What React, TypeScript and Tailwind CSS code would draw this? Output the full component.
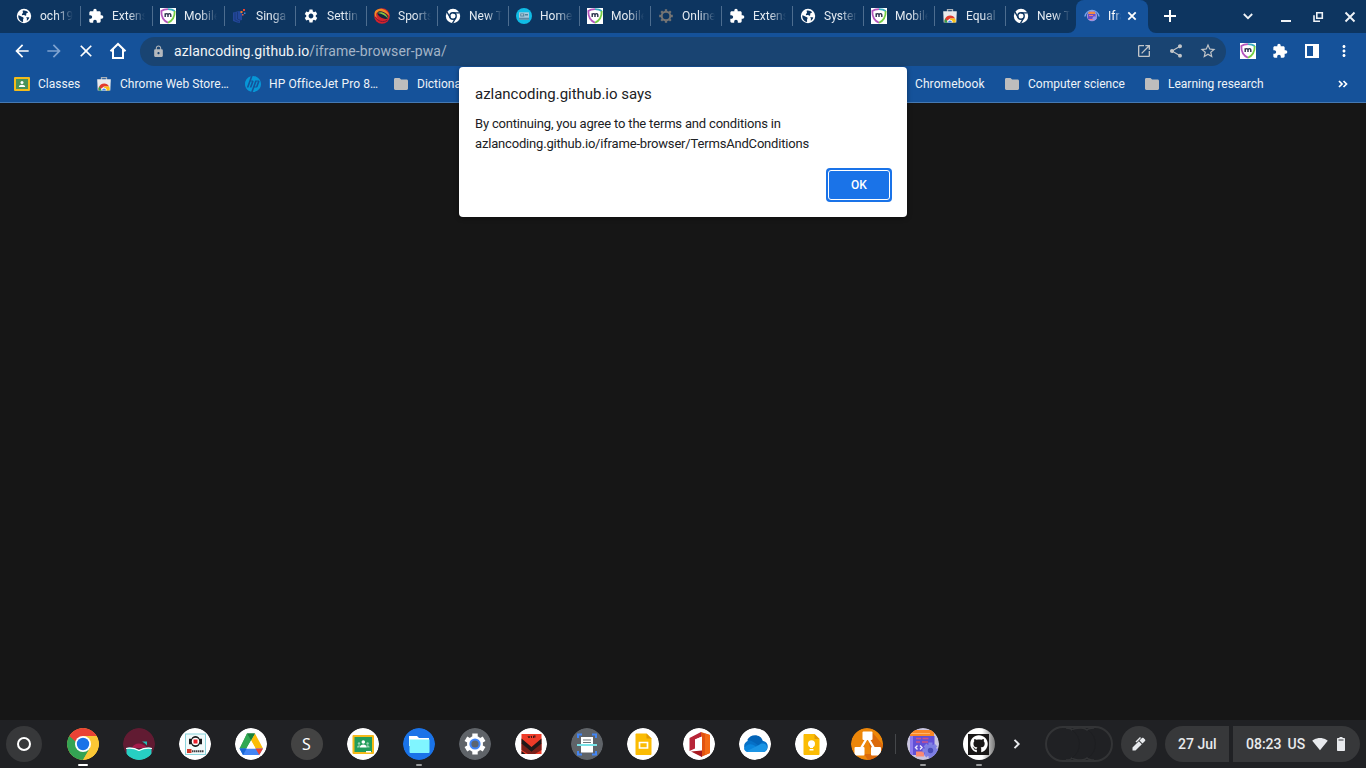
import type { ReactNode } from 'react';
import {
  MdExtension, MdSettings, MdLock, MdArrowBack, MdArrowForward, MdClose,
  MdOpenInNew, MdShare, MdStarBorder, MdMoreVert, MdSignalWifi4Bar,
} from 'react-icons/md';
import { FaGithub } from 'react-icons/fa';
import { SiHp } from 'react-icons/si';

const MobileGuardian = () => (
  <svg width="16" height="16" viewBox="0 0 16 16" className="block">
    <rect width="16" height="16" fill="#fff" />
    <path d="M8 1.2C5.500 1.200 3 1.700 1.300 3 1.200 8 3.300 12.600 8 14.800" fill="none" stroke="#b456bd" strokeWidth="1.800" />
    <path d="M8 1.200C10.500 1.200 13 1.700 14.700 3" fill="none" stroke="#38aebf" strokeWidth="1.800" />
    <path d="M14.700 3C14.800 8 12.700 12.600 8 14.800" fill="none" stroke="#74cf45" strokeWidth="1.800" />
    <path d="M5.200 9V5.300M5.200 6.700c.6-1.500 2.700-1.500 2.800 0V9M8 6.700c.6-1.500 2.700-1.500 2.800 0V9" fill="none" stroke="#28304a" strokeWidth="1.400" />
  </svg>
);

const WebStore = () => (
  <svg width="16" height="16" viewBox="0 0 16 16" className="block">
    <path d="M5.500 4V1.700h5V4" fill="none" stroke="#a9b0b8" strokeWidth="1.300" />
    <path d="M1.200 3.200h13.600l-.5 11.300H1.700z" fill="#e9eaec" />
    <path d="M2.600 14.500a5.600 5.600 0 0 1 .6-4 5.600 5.600 0 0 1 9.900 0H8z" fill="#e33b2e" />
    <path d="M2.600 14.500a5.600 5.600 0 0 1 .6-4l3 4z" fill="#2da14b" />
    <path d="M8 10.500h5.100a5.600 5.600 0 0 1 .4 4H8z" fill="#fbc116" />
    <path d="M5.300 14.500a2.700 2.700 0 0 1 5.400 0z" fill="#fff" />
    <path d="M6 14.500a2 2 0 0 1 4 0z" fill="#4285f4" />
  </svg>
);

const LibraryIcon = () => (
  <svg width="16" height="16" viewBox="0 0 16 16" className="block">
    <path d="M1 4.500L7 3l3 1v8l-2 .5v2.500l-3-.5-4-1.500z" fill="#23479a" />
    <path d="M3 4.500v7.500l4.500 2M5.500 4v7l3.500 1.500" fill="none" stroke="#163470" strokeWidth=".7" />
    <path d="M11 1h2v2h-2z" fill="#e94235" /><path d="M8.500 3h2v2h-2z" fill="#ef7c2b" /><path d="M12 4.500h1.500V6H12z" fill="#3b87d9" /><path d="M10 6h1.500v1.500H10z" fill="#e05b4a" />
  </svg>
);

const SportIcon = () => (
  <svg width="16" height="16" viewBox="0 0 16 16" className="block">
    <circle cx="8" cy="8" r="7.800" fill="#d2232c" />
    <path d="M1 3.500C4-1 13 0 15.500 8c-4-4-9-5-12.500-3.500C1.500 5.500 2 9 4 11 .5 9 0 6 1 3.500z" fill="#f28b24" />
    <ellipse cx="8.800" cy="7.200" rx="5.900" ry="3" transform="rotate(28 8.800 7.200)" fill="#10263f" />
    <path d="M3.500 5c4.500-2 9.500 1 10.500 5.500-2.500-3-5.500-4.500-10.500-5.500z" fill="#8ac43f" />
    <path d="M1.500 9c2 4.500 8 6 12 3" stroke="#7d1636" fill="none" />
  </svg>
);

const HomeSite = () => (
  <svg width="16" height="16" viewBox="0 0 16 16" className="block">
    <circle cx="8" cy="8" r="8" fill="#10bce5" />
    <path d="M3 4.300h10v7.400H3z" fill="#a5c9dc" /><path d="M4.300 5.500h4v3h-4zM9 6h3v1.500H9z" fill="#4f8199" /><path d="M5.200 6.400h2v1h-2z" fill="#d9e9f0" /><path d="M3 9.700h10v2H3z" fill="#5d8aa4" />
  </svg>
);

const GearOutline = () => (
  <svg width="16" height="16" viewBox="0 0 16 16" className="block">
    <g fill="none" stroke="#747474" strokeWidth="2.300"><path d="M8 1.200v13.600M1.200 8h13.600M3.200 3.200l9.600 9.600M12.800 3.200l-9.600 9.600" /></g>
    <circle cx="8" cy="8" r="4.300" fill="#0d3560" stroke="#747474" strokeWidth="2" />
  </svg>
);

const CodeWindow = () => (
  <svg width="32" height="32" viewBox="0 0 32 32" className="block rounded-full">
    <circle cx="16" cy="16" r="16" fill="#c9c5e0" />
    <path d="M3 2h24v6H3z" fill="#fa8726" /><path d="M3 5.500h20" stroke="#ffb26a" />
    <path d="M3 8h24.500v19H3z" fill="#6150d6" />
    <path d="M3 8h3v19H3z" fill="#8d79ed" />
    <path d="M9 10.500h5M15.500 10.500h6M9 14h4M15 14h6" stroke="#c9538c" strokeWidth="1.300" />
    <path d="M10.500 17.500l-2 2 2 2M13 17.500l2 2-2 2" fill="none" stroke="#efeafe" strokeWidth="1.400" />
    <path d="M9 23.500h8v5H9z" fill="#fb8972" />
    <g stroke="#8482e3" strokeWidth="4"><path d="M23.500 14.500v16M15.500 22.500h16M18 17l11 11M29 17l-11 11" /></g>
    <circle cx="23.500" cy="22.500" r="6" fill="#7c7ee2" /><circle cx="23.500" cy="22.500" r="2.700" fill="#4a4db9" />
  </svg>
);

const LoadingIcon = () => (
  <svg width="16" height="16" viewBox="0 0 16 16" className="block shrink-0">
    <path d="M.9 8.500A7.200 7.200 0 0 1 15.100 8.500" fill="none" stroke="#7ba5ee" strokeWidth="1.500" />
    <circle cx="8" cy="8" r="5.200" fill="#9c93dd" /><path d="M4.500 3.800h6.500V6H4.500z" fill="#f08b42" /><path d="M4 6h7.500v5H4z" fill="#6a4dcb" /><path d="M5 7.500h4M5.500 11.500h3.500" stroke="#ed8176" />
    <circle cx="10.500" cy="10.300" r="2" fill="#9495ec" />
  </svg>
);

const Globe = () => (
  <svg width="16" height="16" viewBox="0 0 16 16" className="block">
    <circle cx="8" cy="8" r="7.200" fill="#fff" />
    <path d="M2.300 7.300c1 .2 2 .5 3 1.200.6.500 1.700.5 2.200 1.200.5.900-.6 1.300-.5 2.300 0 .6.300 1.300 0 1.900-3-.3-5-3-4.700-6.600zM6.800 2.600c1.900-.5 4 .2 5.300 1.700-.6.700-1.400.6-1.800 1.300-.4.700.3 1.300-.2 1.800-.8.700-1.500-.4-2.500-.3-.6 0-1 .4-1.500 0-.7-.7.300-1.500.8-2 .4-.6-.5-1.500-.1-2.500zM10.300 9.300c1-.3 2-.1 3 .3-.4 1.300-1.200 2.400-2.300 3.100-.7-.7.300-1.500-.1-2.200-.2-.4-.8-.8-.6-1.200z" fill="#0d3560" />
  </svg>
);
const Puzzle = () => <MdExtension className="block size-4 text-white" />;
const ChromeMono = () => (
  <svg width="16" height="16" viewBox="0 0 16 16" className="block">
    <circle cx="8" cy="8" r="7.200" fill="#fff" />
    <circle cx="8" cy="8" r="3.200" fill="none" stroke="#0d3560" strokeWidth="1.400" />
    <path d="M8 4.800h6.600M5.200 9.600L1.900 3.900M10.800 9.600l-3.300 5.700" stroke="#0d3560" strokeWidth="1.300" fill="none" />
  </svg>
);

const tabs: { label: string; icon: ReactNode }[] = [
  { label: 'och19', icon: <Globe /> },
  { label: 'Extens', icon: <Puzzle /> },
  { label: 'Mobile', icon: <MobileGuardian /> },
  { label: 'Singa', icon: <LibraryIcon /> },
  { label: 'Settin', icon: <MdSettings className="block size-4 text-white" /> },
  { label: 'Sports', icon: <SportIcon /> },
  { label: 'New T', icon: <ChromeMono /> },
  { label: 'Home', icon: <HomeSite /> },
  { label: 'Mobile', icon: <MobileGuardian /> },
  { label: 'Online', icon: <GearOutline /> },
  { label: 'Extens', icon: <Puzzle /> },
  { label: 'System', icon: <Globe /> },
  { label: 'Mobile', icon: <MobileGuardian /> },
  { label: 'Equal', icon: <WebStore /> },
  { label: 'New T', icon: <ChromeMono /> },
];

const fade = '[mask-image:linear-gradient(to_right,black_50%,transparent)]';

function TabStrip() {
  return (
    <div className="flex h-[33px] bg-[#0d3560] pl-[9px]">
      {tabs.map((t, i) => (
        <div key={i} className={`flex shrink-0 items-center pb-px ${i < 3 ? 'w-[72px]' : 'w-[71px]'}`}>
          <div className="ml-[7px] flex size-4 shrink-0 items-center justify-center">{t.icon}</div>
          <div className={`ml-2 w-[33px] shrink-0 overflow-hidden whitespace-nowrap text-[12px] leading-4 text-[#e4ebf2] ${fade}`}>{t.label}</div>
          {i < 14 && <div className={`h-5 w-px shrink-0 bg-[#4d6d8f] ${i < 3 ? 'ml-[7px]' : 'ml-[6px]'}`} />}
        </div>
      ))}
      <div className="-ml-[9px] flex w-[88px] shrink-0">
        <svg width="8" height="33" viewBox="0 0 8 33" className="shrink-0"><path d="M8 25v8H0a8 8 0 0 0 8-8z" fill="#15529a" /></svg>
        <div className="flex w-[72px] items-center rounded-t-lg bg-[#15529a] pb-px pl-2">
          <LoadingIcon />
          <div className={`ml-2 w-[13px] shrink-0 overflow-hidden whitespace-nowrap text-[12px] leading-4 text-white ${fade}`}>Ifra</div>
          <svg className="ml-[3px]" width="16" height="16" viewBox="0 0 16 16"><path d="M4.300 4.300l7.400 7.400M11.700 4.300l-7.400 7.400" stroke="#fff" strokeWidth="1.800" /></svg>
        </div>
        <svg width="8" height="33" viewBox="0 0 8 33" className="shrink-0"><path d="M0 25v8h8a8 8 0 0 1-8-8z" fill="#15529a" /></svg>
      </div>
      <div className="flex flex-1 items-center pb-px text-[#eef2f6]">
        <svg className="ml-[6px]" width="16" height="16" viewBox="0 0 16 16"><path d="M8 2v12M2 8h12" stroke="#fff" strokeWidth="2" /></svg>
        <svg className="ml-[62px]" width="16" height="16" viewBox="0 0 16 16"><path d="M3.800 6L8 10.200 12.200 6" fill="none" stroke="currentColor" strokeWidth="1.800" /></svg>
        <svg className="ml-[22px]" width="16" height="16" viewBox="0 0 16 16"><path d="M3 13h10" stroke="currentColor" strokeWidth="2" /></svg>
        <svg className="ml-4" width="16" height="16" viewBox="0 0 16 16" fill="none" stroke="currentColor" strokeWidth="1.600"><path d="M6.800 4.800h5.500v5.400H6.800zM4 7.200v6h6" /></svg>
        <svg className="ml-4" width="16" height="16" viewBox="0 0 16 16"><path d="M3.500 4.500l9 9M12.500 4.500l-9 9" stroke="currentColor" strokeWidth="1.900" /></svg>
      </div>
    </div>
  );
}

function Toolbar() {
  return (
    <div className="flex h-9 items-center bg-[#15529a] text-white">
      <MdArrowBack className="ml-3 size-5" />
      <MdArrowForward className="ml-3 size-5 text-[#7fa3d0]" />
      <MdClose className="ml-3 size-5" />
      <svg className="ml-[13px]" width="18" height="18" viewBox="0 0 18 18"><path d="M1.500 9.300L9 2l7.500 7.300M4 7.500V16h10V7.500" fill="none" stroke="currentColor" strokeWidth="2" /></svg>
      <div className="mt-px ml-[13px] flex h-[29px] w-[1086px] items-center rounded-full bg-[#194472] pb-px pl-3 text-[#c2c5c8]">
        <MdLock className="size-[13px] text-[#b5b9bd]" />
        <div className="ml-[9px] flex-1 text-[14px] leading-5 tracking-[0.090px] text-[#a4b5c8]"><span className="text-[#f1f4f7]">azlancoding.github.io</span>/iframe-browser-pwa/</div>
        <MdOpenInNew className="size-4" />
        <MdShare className="ml-4 size-4" />
        <MdStarBorder className="ml-[15px] mr-[9px] size-[18px]" />
      </div>
      <div className="ml-[14px]"><MobileGuardian /></div>
      <MdExtension className="ml-4 size-4" />
      <svg className="ml-4" width="16" height="16" viewBox="0 0 16 16"><path d="M2 2h12v12H2z" fill="none" stroke="#fff" strokeWidth="2" /><path d="M9 2h5v12H9z" fill="#fff" /></svg>
      <MdMoreVert className="ml-[15px] size-[18px]" />
    </div>
  );
}

const Folder = () => (
  <svg width="16" height="16" viewBox="0 0 16 16"><path d="M2.400 2H6.500l1.600 1.600h5.500c.8 0 1.400.6 1.400 1.400v7.600c0 .8-.6 1.400-1.400 1.400H2.400C1.600 14 1 13.400 1 12.600V3.400C1 2.600 1.600 2 2.400 2z" fill="#bdbdbd" /></svg>
);

const ClassroomSmall = () => (
  <svg width="16" height="16" viewBox="0 0 16 16"><rect y="1" width="16" height="14" rx="1" fill="#f3bb1b" /><path d="M2 3h12v10H2z" fill="#48935b" /><circle cx="8" cy="6.500" r="1.500" fill="#fff" /><path d="M4.800 11c0-3 6.400-3 6.400 0z" fill="#fff" /></svg>
);

function Bookmark({ icon, label, className }: { icon?: ReactNode; label: string; className: string }) {
  return (
    <div className={`flex shrink-0 items-center overflow-hidden ${className}`}>
      {icon && <div className="mr-2 flex size-4 shrink-0 items-center justify-center">{icon}</div>}
      <span className="whitespace-nowrap">{label}</span>
    </div>
  );
}

function BookmarksBar() {
  return (
    <div className="flex h-[34px] border-b border-[#4679b2] bg-[#15529a] pb-[3px] pl-[14px] text-[12px] leading-4 text-[#eef3f8]">
      <Bookmark className="w-[82px]" icon={<ClassroomSmall />} label="Classes" />
      <Bookmark className="w-[149px] tracking-[0.060px]" icon={<WebStore />} label="Chrome Web Store…" />
      <Bookmark className="w-[148px] tracking-[0.100px]" icon={<SiHp className="block size-4 text-[#0796d6]" />} label="HP OfficeJet Pro 8…" />
      <Bookmark className="w-[66px]" icon={<Folder />} label="Dictiona" />
      <Bookmark className="ml-[456px] w-[89px] tracking-[0.100px]" label="Chromebook" />
      <Bookmark className="w-[140px]" icon={<Folder />} label="Computer science" />
      <Bookmark className="w-[130px]" icon={<Folder />} label="Learning research" />
      <svg className="ml-auto mr-[15px] self-center text-white" width="16" height="16" viewBox="0 0 16 16"><path d="M4 5l3 3-3 3M8.500 5l3 3-3 3" fill="none" stroke="currentColor" strokeWidth="1.700" /></svg>
    </div>
  );
}

function Dialog() {
  return (
    <div className="absolute left-[459px] top-[67px] flex h-[150px] w-[448px] flex-col rounded bg-white px-4 text-[#202124] shadow-[0_1px_5px_rgba(0,0,0,0.400)]">
      <div className="mt-[17px] text-[15px] leading-5 tracking-[-0.020px]">azlancoding.github.io says</div>
      <div className="mt-[10px] text-[13px] leading-5 tracking-[-0.180px]">By continuing, you agree to the terms and conditions in<br />azlancoding.github.io/iframe-browser/TermsAndConditions</div>
      <div className="-mr-px mt-[14px] flex h-[34px] w-[66px] self-end rounded bg-[#1a73e8] p-[2px]">
        <button className="flex-1 rounded-[3px] border border-white bg-[#1a73e8] text-[12px] font-medium leading-4 text-white">OK</button>
      </div>
    </div>
  );
}

const Disc = ({ fill = '#fff', children }: { fill?: string; children?: ReactNode }) => (
  <svg width="32" height="32" viewBox="0 0 32 32" className="block rounded-full"><circle cx="16" cy="16" r="16" fill={fill} />{children}</svg>
);

const ChromeApp = () => (
  <Disc fill="#fbc735">
    <path d="M2.140 8A16 16 0 0 1 29.860 8H16v8L9 20z" fill="#e94235" />
    <path d="M2.140 8A16 16 0 0 0 16 32l7-12h-7z" fill="#34a353" />
    <path d="M16 8h13.860A16 16 0 0 1 16 32l7-12z" fill="#fbc735" />
    <circle cx="16" cy="16" r="8" fill="#fff" /><circle cx="16" cy="16" r="6.200" fill="#1a73e8" />
  </Disc>
);

const LibbyApp = () => (
  <Disc fill="#611b32">
    <path d="M9 20c2-6 11-6 15 0z" fill="#a51b4a" />
    <path d="M19 13.500h5v4l-2-2z" fill="#22bcb7" />
    <path d="M3.500 20c5-1 9 0 12.500 2 4-2 8-3 12.500-2v6C23 34 9 34 3.500 26z" fill="#27cfc3" />
    <path d="M3 20.500c5-1 9 0 13 2 4-2 8-3 13-2" fill="none" stroke="#fff" strokeWidth="1.200" />
  </Disc>
);

const LegoApp = () => (
  <Disc>
    <rect x="6.500" y="6" width="20" height="20.500" fill="#f1fafa" stroke="#8bd4dc" />
    <path d="M10 10.800h2.500c1-3.700 7-3.700 8 0H23v5.400h-2.500c-1 3.700-7 3.700-8 0H10z" fill="#171b1c" /><circle cx="16.500" cy="13.500" r="3.700" fill="#fff" /><path d="M14.500 11.500h4v4h-4z" fill="#ec1e2b" />
    <path d="M8 21h4.500v4H8z" fill="#cf382a" /><path d="M13 23.200h12" stroke="#423f42" strokeWidth="2" strokeDasharray="1.500 .5" />
  </Disc>
);

const DriveApp = () => (
  <Disc>
    <path d="M12 5.500h8L16 12z" fill="#188038" />
    <path d="M12 5.500l4 7L9.500 22 5 20.500z" fill="#30a853" />
    <path d="M12 5.500l-7.500 15h7l4.500-8z" fill="#30a853" />
    <path d="M20 5.500l8 15h-7.500l-4.500-8z" fill="#fbbd08" />
    <path d="M12 5.500h8L16 12.500z" fill="#188038" />
    <path d="M4.500 20.500H28L24 27H8z" fill="#4285f4" />
    <path d="M20.500 20.500H28L24.300 27z" fill="#e94235" />
    <path d="M4.500 20.500h7.200L8 27z" fill="#1967d2" />
    <path d="M16 12.500l4.500 8h-9z" fill="#fff" />
  </Disc>
);

const ClassroomApp = () => (
  <Disc>
    <rect x="5.500" y="7" width="21.500" height="19" rx="1" fill="#f6ba19" /><path d="M7.500 9h17.500v15H7.500z" fill="#239d5b" />
    <circle cx="16.300" cy="14" r="1.800" fill="#fff" /><circle cx="12" cy="15.500" r="1.200" fill="#97d1ae" /><circle cx="20.600" cy="15.500" r="1.200" fill="#97d1ae" />
    <path d="M12.800 19.500c0-4 7-4 7 0z" fill="#fff" /><path d="M10 19.500c0-2 2-2.500 3-2l-.5 2zM22.600 19.500c0-2-2-2.500-3-2l.5 2z" fill="#97d1ae" /><path d="M19 23h5v1.500h-5z" fill="#fff" />
  </Disc>
);

const FilesApp = () => (
  <Disc fill="#1a73e8"><path d="M6 8h8l2 2h10v8H6z" fill="#fff" /><path d="M6.500 11.500h20V24c0 .5-.5 1-1 1H7.500c-.5 0-1-.5-1-1z" fill="#80f5ff" /></Disc>
);

const SettingsApp = () => (
  <Disc fill="#5f6368">
    <path d="M16 5.500v21M6.900 10.750l18.200 10.500M6.900 21.250l18.200-10.500" stroke="#fff" strokeWidth="5.400" />
    <circle cx="16" cy="16" r="8" fill="#fff" /><circle cx="16" cy="16" r="5.600" fill="#4285f4" /><circle cx="16" cy="16" r="3.600" fill="#5c6570" />
  </Disc>
);

const RobotApp = () => (
  <Disc><path d="M6.500 6h20v20h-20z" fill="#ee3b28" /><path d="M6.500 15l10 9 10-9v7l-6.500 4h-7l-6.500-4z" fill="#792019" /><path d="M6.500 10.500l10 8.500 10-8.500v5l-10 8.500-10-8.500z" fill="#211919" /><path d="M13 8l1 2 1-2M16.500 8v2M18.500 10V8h2M18.500 9h2" stroke="#3f1815" fill="none" /><path d="M6.500 23l4 3h-4z" fill="#211919" /></Disc>
);

const ScanApp = () => (
  <Disc fill="#5f6368"><path d="M7 10V6.500h4M21 6.500h4V10M7 23v3.500h4M21 26.500h4V23" fill="none" stroke="#4285f4" strokeWidth="2" /><path d="M10 9h12v15.500H10z" fill="#fff" /><path d="M12 12h8M12 14.500h8" stroke="#6e7479" strokeWidth="1.200" /><path d="M6 17h20" stroke="#79e3e8" strokeWidth="2" /></Disc>
);

const SlidesApp = () => (
  <Disc><path d="M9.500 5.500h10l5 5V26c0 .5-.5 1-1 1h-14c-.5 0-1-.5-1-1V6.500c0-.5.500-1 1-1z" fill="#fbbc04" /><path d="M19.500 5.500l5 5h-5z" fill="#e29a04" /><path d="M12.500 14.500h8v5.500h-8z" fill="none" stroke="#fff" strokeWidth="1.700" /></Disc>
);

const OfficeApp = () => (
  <Disc><path d="M6.500 10L18 4v5l-6 2.500v9L6.500 23z" fill="#b72538" /><path d="M18 4l9 3v18l-9 4z" fill="#e15311" /><path d="M22 5.500L27 7v18l-5 2z" fill="#f36a16" /><path d="M12 11.500l7-3V23l-7-1z" fill="#fff" /><path d="M8 23.500l11-1V29z" fill="#a71920" /></Disc>
);

const OneDriveApp = () => (
  <Disc><path d="M9 24a6 6 0 0 1-.5-11C12 6 21 7 23 13c8 0 7 11 1 11z" fill="#0671c7" /><path d="M8 12.500c5-1 9 4 12 5 2-4 4-4 4-4-2-8-13-8-16-1z" fill="#0364b8" /><path d="M5 21c2-6 9-6 12-2l8 5H9c-2 0-3-1-4-3z" fill="#0a85dc" /><path d="M8 23l12-6c4-3 9-1 8 4-1 2-2 3-4 3H9z" fill="#1b95e5" /></Disc>
);

const KeepApp = () => (
  <Disc><path d="M9.500 6h10l5 5v15c0 .5-.5 1-1 1h-14c-.5 0-1-.5-1-1V7c0-.5.500-1 1-1z" fill="#fbbc04" /><path d="M19.500 6l5 5h-5z" fill="#e29a04" /><circle cx="16.500" cy="15.800" r="3.500" fill="#fff" /><path d="M15 18h3v2h-3zM14.500 21h4v1.500h-4z" fill="#fff" /></Disc>
);

const DrawApp = () => (
  <Disc fill="#ec8609"><path d="M21 4l11 13c0 9-8 15-15 15l-4-6h8l-3-10z" fill="#db6a0b" /><path d="M16.500 9L9 22M16.500 9L24 22" stroke="#fff" strokeWidth="2.400" /><rect x="11.500" y="3.500" width="10" height="8.500" rx="1" fill="#fff" /><rect x="3.500" y="19" width="10" height="8.500" rx="1" fill="#fff" /><rect x="20" y="19" width="10" height="8.500" rx="1" fill="#fff" /></Disc>
);

const shelf: { icon: ReactNode; mark?: string }[] = [
  { icon: <ChromeApp />, mark: 'w-[10px] bg-white' },
  { icon: <LibbyApp /> }, { icon: <LegoApp /> }, { icon: <DriveApp /> },
  { icon: <div className="flex size-8 items-center justify-center rounded-full bg-[#434343] font-['Noto_Sans',sans-serif] text-[16px] leading-5 text-white">S</div> },
  { icon: <ClassroomApp /> }, { icon: <FilesApp />, mark: 'w-[6px] bg-[#9a9b9d]' }, { icon: <SettingsApp /> },
  { icon: <RobotApp /> }, { icon: <ScanApp /> }, { icon: <SlidesApp /> }, { icon: <OfficeApp /> },
  { icon: <OneDriveApp /> }, { icon: <KeepApp /> }, { icon: <DrawApp /> },
  { icon: <CodeWindow />, mark: 'w-[6px] bg-[#9a9b9d]' },
  { icon: <div className="flex size-8 items-center justify-center rounded-full bg-linear-to-r from-white from-60% to-[#777]"><div className="flex size-[21px] items-center justify-center bg-[#191717]"><FaGithub className="size-[18px] text-white" /></div></div>, mark: 'w-[6px] bg-[#9a9b9d]' },
];

function Shelf() {
  return (
    <div className="flex h-12 items-center bg-[#202124] pl-[6px] text-[#e8eaed]">
      <div className="mr-[12.500px] flex size-9 shrink-0 items-center justify-center rounded-full bg-[#37383a]"><div className="size-[14px] rounded-full border-2 border-white" /></div>
      {shelf.map((s, i) => (
        <div key={i} className={`flex h-12 w-14 shrink-0 flex-col items-center pt-2 ${i === 15 ? 'bg-[linear-gradient(#45474a,#45474a)] bg-[length:1px_20px] bg-[position:0_14px] bg-no-repeat' : ''}`}>
          {s.icon}
          {s.mark && <div className={`mt-1 h-[2px] rounded-full ${s.mark}`} />}
        </div>
      ))}
      <svg className="ml-[1.500px]" width="18" height="18" viewBox="0 0 18 18"><path d="M6.500 4.800L10.700 9l-4.200 4.200" fill="none" stroke="currentColor" strokeWidth="1.900" /></svg>
      <svg className="ml-[19px]" width="68" height="36" viewBox="0 0 68 36"><rect x="1" y="1" width="66" height="34" rx="17" fill="#202124" stroke="#333436" strokeWidth="2" /><path d="M21 2q5 0 6 2 2-2 9-2 4 0 6 2 2-2 7-2M21 34q5 0 6-2 2 2 9 2 4 0 6-2 2 2 7 2" fill="none" stroke="#333436" strokeWidth="1.500" /><path d="M27 4a17 17 0 0 1 0 28M43 4a17 17 0 0 1 0 28" fill="none" stroke="#1d1e21" /></svg>
      <div className="ml-2 flex size-9 shrink-0 items-center justify-center rounded-full bg-[#37383a]">
        <svg width="16" height="16" viewBox="0 0 16 16" fill="currentColor"><path d="M1.500 14.500v-3L7.800 5.200l3 3-6.300 6.300z" /><path d="M8.500 4.500l2.500-2.500c.5-.5 1-.5 1.500 0l1.500 1.500c.5.500.5 1 0 1.500l-2.500 2.500z" /><path d="M9.500 1.500L5 6" stroke="currentColor" strokeWidth="1.400" /></svg>
      </div>
      <div className="ml-2 flex h-9 w-16 items-center whitespace-nowrap rounded-l-full rounded-r bg-[#37383a] pl-[13px] text-[14px] font-medium leading-5">27 Jul</div>
      <div className="ml-1 flex h-9 w-[127px] items-center rounded-l rounded-r-full bg-[#37383a] pl-[13px] text-[14px] font-medium leading-5">
        <span>08:23</span><span className="ml-[6px]">US</span>
        <MdSignalWifi4Bar className="ml-[7px] size-4" />
        <svg className="ml-[9px]" width="8" height="16" viewBox="0 0 8 16"><path d="M2.500 1h3v1H7c.6 0 1 .4 1 1v11c0 .6-.4 1-1 1H1c-.6 0-1-.4-1-1V3c0-.6.400-1 1-1h1.500z" fill="currentColor" /><path d="M1.500 3.500h5v1h-5z" fill="#37383a" /></svg>
      </div>
    </div>
  );
}

export default function App() {
  return (
    <div className="relative flex h-[768px] w-[1366px] flex-col overflow-hidden bg-[#161616] font-[Roboto,sans-serif]">
      <TabStrip />
      <Toolbar />
      <BookmarksBar />
      <main className="flex-1" />
      <Shelf />
      <Dialog />
    </div>
  );
}
